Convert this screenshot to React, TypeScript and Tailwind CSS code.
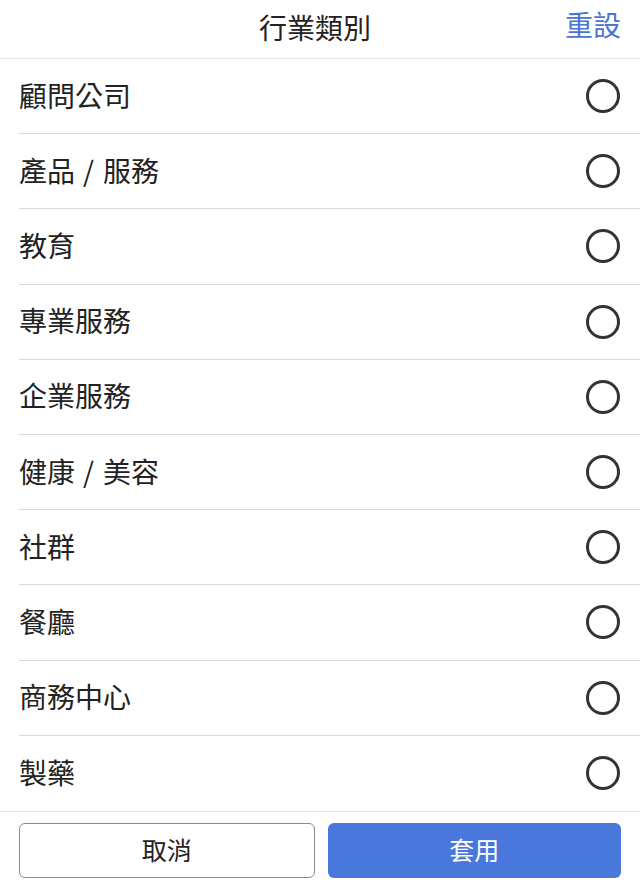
import React from "react";

const items = [
  "顧問公司",
  "產品 / 服務",
  "教育",
  "專業服務",
  "企業服務",
  "健康 / 美容",
  "社群",
  "餐廳",
  "商務中心",
  "製藥",
];

function Label({ text }: { text: string }) {
  const parts = text.split(" / ");
  if (parts.length === 1) return <>{text}</>;
  return (
    <>
      {parts[0]}
      <span className="pl-[8px] pr-[9px]">/</span>
      {parts[1]}
    </>
  );
}

export default function App() {
  return (
    <div
      className="w-[640px] h-[894px] bg-white flex flex-col text-[#222]"
      style={{ fontFamily: '"Noto Sans CJK TC", "Noto Sans", sans-serif' }}
    >
      <div className="relative h-[59px] shrink-0 border-b border-[#e3e3e3] flex items-center justify-center">
        <span className="text-[28px] leading-none text-[#222] ml-[-10px] -mt-[4px]">行業類別</span>
        <span className="absolute right-[19px] top-[10px] text-[28px] leading-none text-[#4a74d2]">重設</span>
      </div>
      <div className="flex flex-col">
        {items.map((t, i) => (
          <div
            key={t}
            className={`ml-[19px] h-[75.2px] flex items-center justify-between pr-[20px] ${
              i < items.length - 1 ? "border-b border-[#d9d9d9]" : ""
            }`}
          >
            <span className="text-[28px] leading-none -mt-[3px]">
              <Label text={t} />
            </span>
            <span className="w-[34px] h-[34px] rounded-full border-[3px] border-[#333]" />
          </div>
        ))}
      </div>
      <div className="border-t border-[#e3e3e3] flex gap-[13px] px-[19px] pt-[11px]">
        <button className="flex-1 h-[55px] rounded-[6px] border-[1.5px] border-[#8a8a8a] bg-white text-[25px] text-[#222] flex items-center justify-center">
          <span className="-mt-[2px]">取消</span>
        </button>
        <button className="flex-1 h-[55px] rounded-[6px] bg-[#4a77dc] text-[25px] text-white flex items-center justify-center">
          <span className="-mt-[2px]">套用</span>
        </button>
      </div>
    </div>
  );
}
